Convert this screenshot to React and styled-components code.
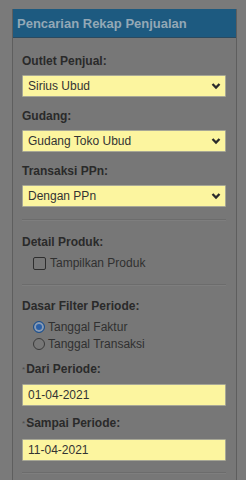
import React from 'react';
import styled, { createGlobalStyle } from 'styled-components';

const GlobalStyle = createGlobalStyle`
  html, body {
    margin: 0;
    background: #7a7a7a;
    font-family: "Liberation Sans", Arial, sans-serif;
  }
`;

const Page = styled.div`
  padding: 9px 9px 0 12px;
  height: 480px;
  box-sizing: border-box;
  overflow: hidden;
`;

const Panel = styled.div`
  background: #777777;
  border-left: 1px solid #5e5e5e;
  border-right: 1px solid #5e5e5e;
  min-height: 480px;
`;

const Header = styled.div`
  height: 29px;
  background: #1d5a80;
  border-bottom: 1px solid #2a4a60;
  box-sizing: border-box;
  display: flex;
  align-items: center;
  padding-left: 4px;
  font-size: 13px;
  font-weight: bold;
  color: #93a8b6;
`;

const Body = styled.div`
  padding: 16px 10px 0 9px;
`;

const Label = styled.label`
  display: block;
  font-size: 12px;
  line-height: 15px;
  font-weight: bold;
  color: #2a2a2a;
  margin-bottom: ${p => p.$gap ?? 6}px;
`;

const Req = styled.span`
  font-size: 8px;
  font-weight: normal;
  color: #4a4a4a;
  vertical-align: top;
  margin-right: 1px;
`;

const Field = styled.div`
  margin-top: ${p => p.$top || 0}px;
  margin-bottom: ${p => p.$gap ?? 12}px;
`;

const SelectWrap = styled.div`
  position: relative;
`;

const Select = styled.select`
  appearance: none;
  width: 100%;
  height: 22px;
  box-sizing: border-box;
  background: #fcf59f;
  border: 1px solid #a7a796;
  border-radius: 1px;
  padding: 0 20px 0 5px;
  font-family: inherit;
  font-size: 12px;
  color: #333;
  outline: none;
`;

const Chevron = styled.svg`
  position: absolute;
  right: 5px;
  top: 7px;
  pointer-events: none;
`;

const Input = styled.input`
  display: block;
  width: 100%;
  height: 22px;
  box-sizing: border-box;
  background: #fcf59f;
  border: 1px solid #a7a796;
  border-radius: 1px;
  padding: 0 5px;
  font-family: inherit;
  font-size: 12px;
  color: #333;
  outline: none;
`;

const Rule = styled.div`
  border-top: 1px solid #6c6c6c;
  border-bottom: 1px solid #7e7e7e;
  margin: ${p => p.$top}px 0 ${p => p.$bottom}px;
`;

const Option = styled.div`
  display: flex;
  align-items: center;
  height: ${p => p.$h || 17}px;
  padding-left: 11px;
  font-size: 12px;
  color: #303030;
`;

const Box = styled.span`
  width: 11px;
  height: 11px;
  border: 1px solid #2e2e2e;
  border-radius: 2px;
  margin-right: 4px;
  flex-shrink: 0;
`;

const Radio = styled.span`
  width: 10px;
  height: 10px;
  border-radius: 50%;
  border: 1px solid ${p => (p.$on ? '#1d4f8a' : '#3a3a3a')};
  background: ${p => (p.$on ? '#2a5fa6' : 'transparent')};
  box-shadow: ${p => (p.$on ? 'inset 0 0 0 2px #8a9bb2' : 'none')};
  margin-right: 3px;
  flex-shrink: 0;
`;

const ChevronIcon = () => (
  <Chevron width="10" height="8" viewBox="0 0 10 8">
    <path d="M1.5 2 L5 5.5 L8.5 2" fill="none" stroke="#2b2b2b" strokeWidth="2.3" />
  </Chevron>
);

const SelectField = ({ label, value, gap }) => (
  <Field $gap={gap}>
    <Label>{label}</Label>
    <SelectWrap>
      <Select defaultValue={value}>
        <option>{value}</option>
      </Select>
      <ChevronIcon />
    </SelectWrap>
  </Field>
);

const App = () => (
  <>
    <GlobalStyle />
    <Page>
      <Panel>
        <Header>Pencarian Rekap Penjualan</Header>
        <Body>
          <SelectField label="Outlet Penjual:" value="Sirius Ubud" />
          <SelectField label="Gudang:" value="Gudang Toko Ubud" />
          <SelectField label="Transaksi PPn:" value="Dengan PPn" gap={0} />

          <Rule $top={12} $bottom={14} />

          <Label $gap={5}>Detail Produk:</Label>
          <Option $h={16}>
            <Box />
            Tampilkan Produk
          </Option>

          <Rule $top={13} $bottom={13} />

          <Label $gap={4}>Dasar Filter Periode:</Label>
          <Option>
            <Radio $on />
            Tanggal Faktur
          </Option>
          <Option>
            <Radio />
            Tanggal Transaksi
          </Option>

          <Field $top={10} $gap={10}>
            <Label $gap={7}><Req>*</Req>Dari Periode:</Label>
            <Input defaultValue="01-04-2021" />
          </Field>
          <Field $gap={0}>
            <Label $gap={8}><Req>*</Req>Sampai Periode:</Label>
            <Input defaultValue="11-04-2021" />
          </Field>

          <Rule $top={11} $bottom={0} />
        </Body>
      </Panel>
    </Page>
  </>
);

export default App;
